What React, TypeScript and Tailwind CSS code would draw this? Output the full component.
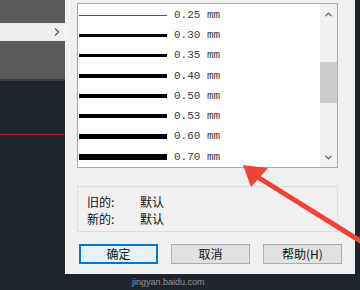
import { ChevronDown, ChevronRight, ChevronUp } from "lucide-react";

const weights = [
  { label: "0.25", h: "h-px", color: "bg-[#555]" },
  { label: "0.30", h: "h-[3px]", color: "bg-black" },
  { label: "0.35", h: "h-[3px]", color: "bg-black" },
  { label: "0.40", h: "h-[4px]", color: "bg-black" },
  { label: "0.50", h: "h-[4px]", color: "bg-black" },
  { label: "0.53", h: "h-[4px]", color: "bg-black" },
  { label: "0.60", h: "h-[5px]", color: "bg-black" },
  { label: "0.70", h: "h-[6px]", color: "bg-black" },
];

const cjk = "font-['Noto_Sans_CJK_SC',sans-serif]";

export default function App() {
  return (
    <div className="relative flex w-[360px] h-[290px] overflow-hidden bg-[#1e242d]">
      {/* left side of the drawing window */}
      <div className="flex flex-col w-[65px] shrink-0">
        <div className="h-[23px] bg-[#5a5a5a]" />
        <div className="flex items-center justify-end h-[18px] bg-[#eeeeee] pr-[2px]">
          <ChevronRight size={12} strokeWidth={2.5} className="text-[#555]" />
        </div>
        <div className="h-[38px] bg-[#5a5a5a]" />
        <div className="h-[2px] bg-[#3c3c3c]" />
        <div className="h-[53px]" />
        <div className="h-px bg-[#b01818]" />
      </div>

      {/* dialog */}
      <div className={`flex flex-col w-[290px] h-[274px] shrink-0 bg-[#f0f0f0] border-l border-[#fafafa] pl-[11px] pt-[3px] ${cjk}`}>
        {/* list box */}
        <div className="flex w-[261px] h-[165px] border border-[#a9a9a9] bg-white">
          <div className="flex flex-col flex-1 pt-px pl-px">
            {weights.map((w) => (
              <div key={w.label} className="flex items-center h-[20.3px] gap-[7px]">
                <div className={`w-[88px] ${w.h} ${w.color}`} />
                <span className="font-['Liberation_Mono',monospace] text-[11px] text-[#3a3a3a] whitespace-pre">
                  {w.label} mm
                </span>
              </div>
            ))}
          </div>
          <div className="flex flex-col w-[17px] bg-[#f0f0f0]">
            <div className="flex items-center justify-center h-[17px] pt-[4px]">
              <ChevronUp size={11} strokeWidth={2.5} className="text-[#606060]" />
            </div>
            <div className="h-[41px]" />
            <div className="h-[41px] bg-[#cdcdcd]" />
            <div className="flex-1" />
            <div className="flex items-center justify-center h-[17px] pb-[3px]">
              <ChevronDown size={11} strokeWidth={2.5} className="text-[#606060]" />
            </div>
          </div>
        </div>

        {/* old / new */}
        <div className="mt-[18px] w-[261px] h-[46px] border border-[#dcdcdc] pl-[9px] pt-[6px] text-[12px] text-[#111] leading-[17px]">
          <div className="flex">
            <span className="w-[53px]">旧的:</span>
            <span>默认</span>
          </div>
          <div className="flex">
            <span className="w-[53px]">新的:</span>
            <span>默认</span>
          </div>
        </div>

        {/* buttons */}
        <div className="flex gap-[13px] mt-[12px] pl-[2px] text-[12px] text-[#111]">
          <button className="w-[79px] h-[20px] border border-[#0078d7] bg-[#e5f1fb] shadow-[inset_0_0_0_1px_#0078d7] leading-none">
            确定
          </button>
          <button className="w-[79px] h-[20px] border border-[#adadad] bg-[#e1e1e1] leading-none">
            取消
          </button>
          <button className="w-[79px] h-[20px] border border-[#adadad] bg-[#e1e1e1] leading-none">
            帮助(H)
          </button>
        </div>
      </div>

      {/* watermark */}
      <div className="absolute left-[132px] top-[276px] text-[9px] text-white/50 font-['Liberation_Sans',sans-serif] pointer-events-none">
        jingyan.baidu.com
      </div>

      {/* red arrow */}
      <svg className="absolute left-0 top-0 pointer-events-none" width="360" height="290" viewBox="0 0 360 290">
        <line x1="362" y1="242" x2="256" y2="176" stroke="#f2403a" strokeWidth="5" strokeLinecap="round" />
        <polygon points="243,165 268,168 251,187" fill="#f2403a" />
      </svg>
    </div>
  );
}
